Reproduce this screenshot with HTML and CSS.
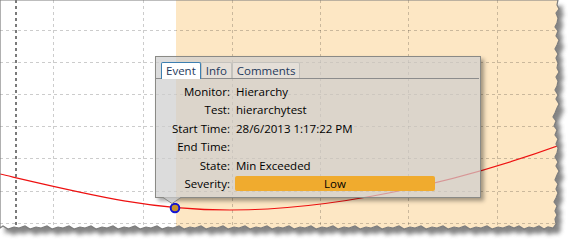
FILE: index.html
```html
<!DOCTYPE html>
<html>
<head>
<meta charset="utf-8">
<link rel="stylesheet" href="styles.css">
</head>
<body>
<div class="chart">
  <svg class="plot" width="577" height="245" viewBox="0 0 577 245">
    <defs>
      <clipPath id="paper">
        <polygon id="edge" points="0,0 558,0 557,5 559,9 556,13 558,18 557,23 555,27 558,31 556,36 559,40 557,45 555,49 558,54 556,58 558,63 557,68 559,72 556,77 558,81 557,86 555,90 558,95 556,99 559,104 557,108 555,113 553,117 556,121 554,126 557,130 555,135 558,139 556,144 558,148 557,153 555,157 558,162 556,166 559,171 557,175 555,180 558,184 556,189 558,193 556,198 554,202 557,206 555,211 557,215 555,219 556,224 553,228 548,227 544,229 539,226 534,228 529,227 524,229 519,226 514,228 509,226 503,228 498,227 492,229 487,226 481,228 476,227 470,229 465,226 459,228 454,227 448,229 443,226 437,228 432,227 426,229 421,226 415,228 410,227 404,229 399,226 393,228 388,227 382,229 377,226 371,228 366,227 360,229 355,226 349,228 344,227 338,229 333,226 327,228 322,227 316,229 311,226 305,228 300,227 294,229 289,226 283,228 278,227 272,229 267,226 261,228 256,227 250,229 245,226 239,228 234,227 228,229 223,226 217,228 212,227 206,229 201,226 195,228 190,227 184,229 179,226 173,228 168,227 162,229 157,226 151,228 146,227 140,229 135,226 129,228 124,227 118,229 113,226 107,228 102,227 96,229 91,226 85,228 80,227 74,229 69,226 63,228 58,227 52,229 47,226 41,228 36,227 30,229 25,226 19,228 14,227 8,229 3,226 0,228"/>
      </clipPath>
      <filter id="blur" x="-5%" y="-5%" width="115%" height="115%">
        <feGaussianBlur stdDeviation="2.2"/>
      </filter>
    </defs>
    <use href="#edge" class="shadow" transform="translate(5,6)" filter="url(#blur)"/>
    <g clip-path="url(#paper)">
      <rect x="0" y="0" width="577" height="245" fill="#ffffff"/>
      <rect x="176" y="0" width="401" height="245" class="zone"/>
      <g class="grid">
        <line x1="0" y1="30.5" x2="577" y2="30.5"/>
        <line x1="0" y1="62.5" x2="577" y2="62.5"/>
        <line x1="0" y1="94.5" x2="577" y2="94.5"/>
        <line x1="0" y1="126.5" x2="577" y2="126.5"/>
        <line x1="0" y1="158.5" x2="577" y2="158.5"/>
        <line x1="0" y1="191.5" x2="577" y2="191.5"/>
        <line x1="0" y1="223.5" x2="577" y2="223.5"/>
        <line x1="53.5" y1="0" x2="53.5" y2="245"/>
        <line x1="143.5" y1="0" x2="143.5" y2="245"/>
        <line x1="232.5" y1="0" x2="232.5" y2="245"/>
        <line x1="320.5" y1="0" x2="320.5" y2="245"/>
        <line x1="408.5" y1="0" x2="408.5" y2="245"/>
        <line x1="497.5" y1="0" x2="497.5" y2="245"/>
      </g>
      <line class="axis" x1="16" y1="0" x2="16" y2="245"/>
      <path class="curve" d="M0,174 C90,195 150,210 230,210 C330,210 450,185 560,145"/>
      <circle class="point" cx="175" cy="208" r="4.3"/>
    </g>
    <use href="#edge" class="rim"/>
  </svg>

  <div class="tip">
    <div class="tabs">
      <div class="tab active">Event</div>
      <div class="tab">Info</div>
      <div class="tab">Comments</div>
    </div>
    <div class="rows">
      <div class="lbl">Monitor:</div><div class="val">Hierarchy</div>
      <div class="lbl">Test:</div><div class="val">hierarchytest</div>
      <div class="lbl">Start Time:</div><div class="val">28/6/2013 1:17:22 PM</div>
      <div class="lbl">End Time:</div><div class="val"></div>
      <div class="lbl">State:</div><div class="val">Min Exceeded</div>
      <div class="lbl">Severity:</div><div class="val"><div class="sev">Low</div></div>
    </div>
    <svg class="tail" width="20" height="8" viewBox="0 0 20 8">
      <polygon points="0,0 9,6 18,0" class="tail-fill"/>
      <polyline points="0,0.5 9,6.5 18,0.5" class="tail-line"/>
    </svg>
  </div>
</div>
</body>
</html>
```

FILE: styles.css
```css
html, body {
  margin: 0;
  padding: 0;
  background: #ffffff;
}

.chart {
  position: relative;
  width: 577px;
  height: 245px;
  overflow: hidden;
}

.plot {
  display: block;
}

.shadow {
  fill: #666666;
  opacity: 0.8;
}

.zone {
  fill: #fde7c4;
}

.grid line {
  stroke: rgba(0, 0, 0, 0.2);
  stroke-width: 1;
  stroke-dasharray: 3 3;
}

.axis {
  stroke: #7a7a7a;
  stroke-width: 2;
  stroke-dasharray: 3 3;
}

.curve {
  fill: none;
  stroke: #ee1111;
  stroke-width: 1.2;
}

.point {
  fill: #c8922a;
  stroke: #1414d2;
  stroke-width: 2;
}

.rim {
  fill: none;
  stroke: #7c7c7c;
  stroke-width: 1.2;
}

.tip {
  position: absolute;
  left: 155px;
  top: 56px;
  width: 324px;
  height: 140px;
  border: 1px solid #8a8a86;
  background: rgba(206, 206, 206, 0.71);
  box-shadow: 3px 3px 4px rgba(0, 0, 0, 0.35);
  font-family: "Open Sans", "Noto Sans", sans-serif;
  font-size: 11.5px;
  color: #000000;
}

.tabs {
  display: flex;
  height: 16px;
  padding: 5px 0 0 5px;
  margin-right: 1px;
  border-bottom: 1px solid #8c8c8c;
}

.tab {
  height: 15px;
  line-height: 15px;
  padding: 0 4px;
  border: 1px solid #c4c2bd;
  border-bottom: none;
  border-radius: 2px 2px 0 0;
  background: rgba(255, 255, 255, 0.25);
  color: #1e395b;
}

.tab.active {
  height: 16px;
  background: #ffffff;
  border-color: #3c7fb1;
  margin-bottom: -1px;
}

.rows {
  display: grid;
  grid-template-columns: 74px 1fr;
  column-gap: 6px;
  grid-auto-rows: 18.4px;
  padding-top: 4px;
  line-height: 18.4px;
}

.lbl {
  text-align: right;
  white-space: nowrap;
}

.val {
  white-space: nowrap;
}

.sev {
  width: 200px;
  height: 15px;
  margin-top: 1px;
  margin-left: -1px;
  line-height: 15px;
  border-radius: 2px;
  background: #f0ab2e;
  text-align: center;
}

.tail {
  position: absolute;
  left: 7px;
  top: 100%;
  overflow: visible;
}

.tail-fill {
  fill: rgba(206, 206, 206, 0.71);
}

.tail-line {
  fill: none;
  stroke: #8a8a86;
  stroke-width: 1;
}
```
